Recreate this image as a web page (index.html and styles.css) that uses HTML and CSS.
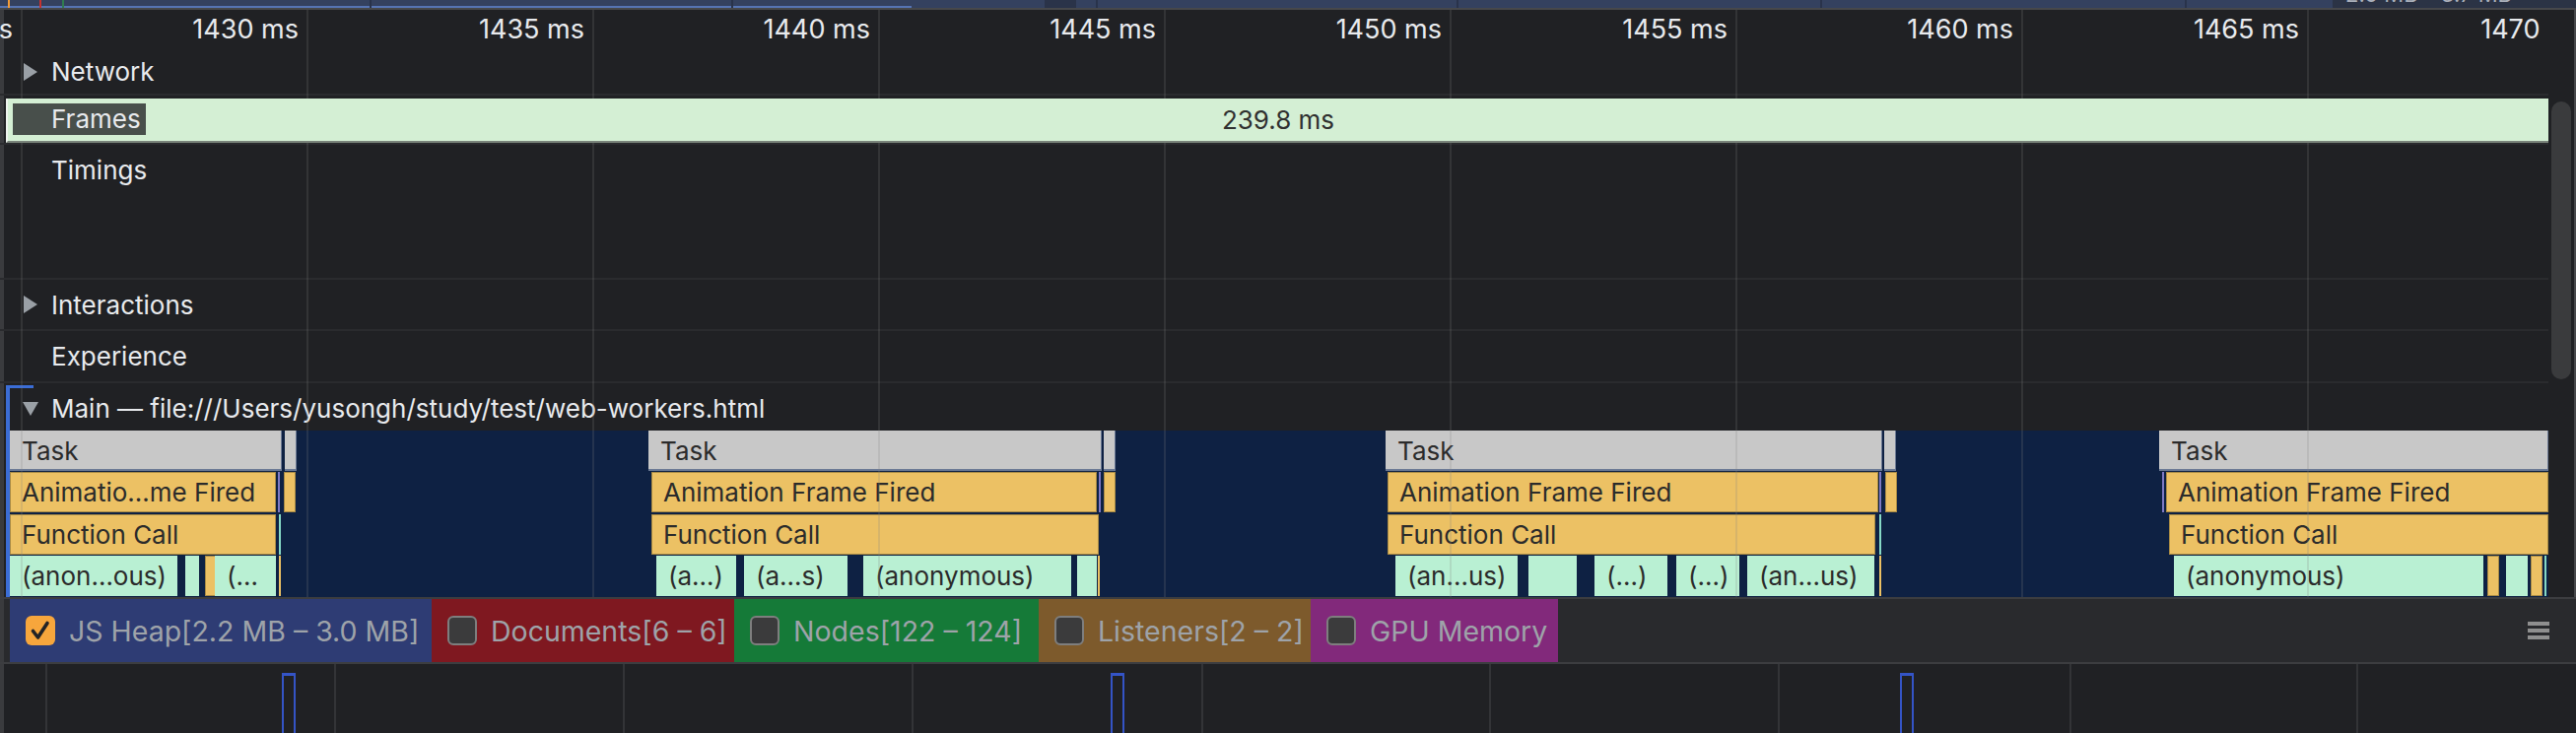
FILE: index.html
```html
<!DOCTYPE html>
<html>
<head>
<meta charset="utf-8">
<title>Performance</title>
<link rel="stylesheet" href="styles.css">
</head>
<body>
<div class="panel">
  <div class="overview">
    <span class="ov-sel"></span>
    <span class="ov-line" style="left:375px"></span>
    <span class="ov-line" style="left:742px"></span>
    <span class="ov-block" style="left:1060px;width:32px"></span>
    <span class="ov-line" style="left:1112px"></span>
    <span class="ov-line" style="left:1478px"></span>
    <span class="ov-line" style="left:1847px"></span>
    <span class="ov-line" style="left:2217px"></span>
    <span class="ov-right"></span>
    <span class="ov-text">2.0 MB – 3.7 MB</span>
    <span class="ov-mark ov-orange" style="left:8px"></span>
    <span class="ov-mark ov-red" style="left:40px"></span>
    <span class="ov-mark ov-green" style="left:63px"></span>
  </div>
  <div class="divider"></div>

  <div class="workspace">
    <div class="timeline">
      <div class="ruler">
        <span class="tick-label" style="left:13px">1425 ms</span>
        <span class="tick-label" style="left:303px">1430 ms</span>
        <span class="tick-label" style="left:593px">1435 ms</span>
        <span class="tick-label" style="left:883px">1440 ms</span>
        <span class="tick-label" style="left:1173px">1445 ms</span>
        <span class="tick-label" style="left:1463px">1450 ms</span>
        <span class="tick-label" style="left:1753px">1455 ms</span>
        <span class="tick-label" style="left:2043px">1460 ms</span>
        <span class="tick-label" style="left:2333px">1465 ms</span>
        <span class="tick-label" style="left:2623px">1470 ms</span>
      </div>

      <div class="track track-network">
        <span class="caret caret-right"></span><span class="track-title">Network</span>
      </div>

      <div class="track track-frames">
        <div class="frames-bar">
          <span class="frames-label">Frames</span>
          <span class="frames-dur">239.8 ms</span>
        </div>
      </div>

      <div class="track track-timings">
        <div class="track-head">
          <span class="caret caret-none"></span><span class="track-title">Timings</span>
        </div>
      </div>

      <div class="track track-interactions">
        <span class="caret caret-right"></span><span class="track-title">Interactions</span>
      </div>

      <div class="track track-experience">
        <span class="caret caret-none"></span><span class="track-title">Experience</span>
      </div>

      <div class="main-group">
        <div class="track track-main">
          <span class="caret caret-down"></span><span class="track-title">Main — file:///Users/yusongh/study/test/web-workers.html</span>
        </div>
        <div class="flame">
          <div class="frow">
            <div class="bar task" style="left:0;width:276px">Task</div>
            <div class="bar task" style="left:279px;width:5px"></div>
            <div class="bar task" style="left:648px;width:460px">Task</div>
            <div class="bar task" style="left:1110px;width:5px"></div>
            <div class="bar task" style="left:1396px;width:504px">Task</div>
            <div class="bar task" style="left:1902px;width:8px"></div>
            <div class="bar task" style="left:2181px;width:395px">Task</div>
          </div>
          <div class="frow">
            <div class="bar aff" style="left:0;width:270px">Animatio…me Fired</div>
            <div class="bar thin purple" style="left:272px;width:2px"></div>
            <div class="bar aff" style="left:278px;width:4px"></div>
            <div class="bar aff" style="left:651px;width:452px">Animation Frame Fired</div>
            <div class="bar thin purple" style="left:1105px;width:2px"></div>
            <div class="bar aff" style="left:1110px;width:5px"></div>
            <div class="bar aff" style="left:1398px;width:498px">Animation Frame Fired</div>
            <div class="bar thin purple" style="left:1897px;width:2px"></div>
            <div class="bar aff" style="left:1903px;width:7px"></div>
            <div class="bar thin purple" style="left:2184px;width:2px"></div>
            <div class="bar aff" style="left:2188px;width:388px">Animation Frame Fired</div>
          </div>
          <div class="frow">
            <div class="bar aff" style="left:0;width:270px">Function Call</div>
            <div class="bar thin teal" style="left:273px;width:2px"></div>
            <div class="bar aff" style="left:651px;width:454px">Function Call</div>
            <div class="bar aff" style="left:1398px;width:495px">Function Call</div>
            <div class="bar thin teal" style="left:1897px;width:2px"></div>
            <div class="bar aff" style="left:2191px;width:385px">Function Call</div>
          </div>
          <div class="frow">
            <div class="bar anon" style="left:0;width:170px">(anon…ous)</div>
            <div class="bar anon" style="left:178px;width:14px"></div>
            <div class="bar aff" style="left:198px;width:7px"></div>
            <div class="bar anon" style="left:208px;width:62px">(…</div>
            <div class="bar thin orange" style="left:273px;width:2px"></div>
            <div class="bar anon" style="left:656px;width:81px">(a…)</div>
            <div class="bar anon" style="left:745px;width:105px">(a…s)</div>
            <div class="bar anon" style="left:866px;width:211px">(anonymous)</div>
            <div class="bar anon" style="left:1083px;width:20px"></div>
            <div class="bar thin orange" style="left:1104px;width:2px"></div>
            <div class="bar anon" style="left:1406px;width:124px">(an…us)</div>
            <div class="bar anon" style="left:1541px;width:49px"></div>
            <div class="bar anon" style="left:1608px;width:74px">(…)</div>
            <div class="bar anon" style="left:1691px;width:64px">(…)</div>
            <div class="bar anon" style="left:1763px;width:129px">(an…us)</div>
            <div class="bar thin orange" style="left:1897px;width:2px"></div>
            <div class="bar anon" style="left:2196px;width:314px">(anonymous)</div>
            <div class="bar aff" style="left:2514px;width:8px"></div>
            <div class="bar anon" style="left:2533px;width:22px"></div>
            <div class="bar aff" style="left:2558px;width:7px"></div>
            <div class="bar thin teal" style="left:2572px;width:2px"></div>
          </div>
        </div>
      </div>

      <div class="grid">
        <i class="gl" style="left:21px"></i>
        <i class="gl" style="left:311px"></i>
        <i class="gl" style="left:601px"></i>
        <i class="gl" style="left:891px"></i>
        <i class="gl" style="left:1181px"></i>
        <i class="gl" style="left:1471px"></i>
        <i class="gl" style="left:1761px"></i>
        <i class="gl" style="left:2051px"></i>
        <i class="gl" style="left:2341px"></i>
      </div>
    </div>
    <div class="scrollcol"><div class="thumb"></div></div>
  </div>

  <div class="counters">
    <label class="counter c-heap">
      <span class="checkbox on"><svg viewBox="0 0 30 30" width="30" height="30"><path d="M7.5 15.5 L12.5 22 L22 7.5" fill="none" stroke="#222326" stroke-width="3.6" stroke-linecap="round" stroke-linejoin="round"/></svg></span>
      <span class="counter-text">JS Heap[2.2 MB – 3.0 MB]</span>
    </label>
    <label class="counter c-docs">
      <span class="checkbox off"></span>
      <span class="counter-text">Documents[6 – 6]</span>
    </label>
    <label class="counter c-nodes">
      <span class="checkbox off"></span>
      <span class="counter-text">Nodes[122 – 124]</span>
    </label>
    <label class="counter c-listen">
      <span class="checkbox off"></span>
      <span class="counter-text">Listeners[2 – 2]</span>
    </label>
    <label class="counter c-gpu">
      <span class="checkbox off"></span>
      <span class="counter-text">GPU Memory</span>
    </label>
    <div class="menu"><i></i><i></i><i></i></div>
  </div>

  <div class="memchart">
    <i class="mgl" style="left:46px"></i>
    <i class="mgl" style="left:339px"></i>
    <i class="mgl" style="left:632px"></i>
    <i class="mgl" style="left:925px"></i>
    <i class="mgl" style="left:1219px"></i>
    <i class="mgl" style="left:1511px"></i>
    <i class="mgl" style="left:1804px"></i>
    <i class="mgl" style="left:2100px"></i>
    <i class="mgl" style="left:2391px"></i>
    <span class="spike" style="left:286px"></span>
    <span class="spike" style="left:1127px"></span>
    <span class="spike" style="left:1928px"></span>
  </div>
</div>
</body>
</html>
```

FILE: styles.css
```css
* { box-sizing: border-box; margin: 0; padding: 0; }
html, body {
  width: 2614px;
  height: 744px;
  overflow: hidden;
  background: #202124;
}
body {
  font-family: Inter, "Liberation Sans", Arial, sans-serif;
  color: #e8eaed;
}
.panel {
  display: flex;
  flex-direction: column;
  width: 2614px;
  height: 744px;
}

/* overview strip */
.overview {
  position: relative;
  flex: none;
  height: 8px;
  background: #34415f;
  overflow: hidden;
}
.ov-sel { position: absolute; left: 0; width: 925px; bottom: 0; height: 2px; background: #5674b3; }
.ov-line { position: absolute; top: 0; bottom: 0; width: 2px; background: #29334b; }
.ov-block { position: absolute; top: 0; bottom: 0; background: #2a3349; }
.ov-right { position: absolute; left: 2367px; right: 0; top: 0; bottom: 0; background: #2b3345; }
.ov-text { position: absolute; left: 2380px; top: -18px; font-size: 22px; line-height: 24px; color: #aab0bb; white-space: nowrap; }
.ov-mark { position: absolute; top: 0; bottom: 0; width: 2px; }
.ov-orange { background: #f29b38; }
.ov-red { background: #c8322f; }
.ov-green { background: #2f7d4f; }
.divider { flex: none; height: 2px; background: #47484b; }

/* main workspace */
.workspace {
  flex: none;
  display: flex;
  height: 596px;
}
.timeline {
  position: relative;
  width: 2586px;
  overflow: hidden;
  display: flex;
  flex-direction: column;
  box-shadow: inset 4px 0 #3a3b3e;
}
.scrollcol {
  width: 28px;
  padding: 93px 3px 0 3px;
  border-right: 2px solid #47484b;
}
.thumb {
  width: 20px;
  height: 282px;
  border-radius: 10px;
  background: #3a3b3d;
}

/* ruler */
.ruler {
  position: relative;
  flex: none;
  height: 40px;
}
.tick-label {
  position: absolute;
  top: 0;
  line-height: 40px;
  font-size: 27px;
  color: #e8eaed;
  white-space: nowrap;
  transform: translateX(-100%);
}

/* tracks */
.track {
  flex: none;
  display: flex;
  align-items: center;
  gap: 13px;
  padding-left: 23px;
  border-bottom: 2px solid #2a2b2e;
  font-size: 26px;
  white-space: nowrap;
}
.track-network { height: 47px; }
.track-frames { height: 50px; padding: 3px 0 0 0; align-items: flex-start; }
.track-timings { height: 137px; padding-left: 0; align-items: flex-start; }
.track-head { display: flex; align-items: center; gap: 13px; height: 50px; padding-left: 23px; }
.track-interactions { height: 52px; }
.track-experience { height: 53px; }
.track-main { height: 48px; border-bottom: 0; padding-top: 3px; }

.track-title { color: #e8eaed; }
.caret {
  flex: none;
  width: 16px;
  height: 18px;
  display: flex;
  align-items: center;
  justify-content: center;
}
.caret-right::before {
  content: "";
  border-left: 14px solid #9aa0a6;
  border-top: 9px solid transparent;
  border-bottom: 9px solid transparent;
}
.caret-down::before {
  content: "";
  border-top: 14px solid #9aa0a6;
  border-left: 8px solid transparent;
  border-right: 8px solid transparent;
}

/* frames */
.frames-bar {
  position: relative;
  z-index: 6;
  width: 2580px;
  margin-left: 6px;
  height: 45px;
  background: #d4efd4;
  border-left: 2px solid #eef3ee;
  border-bottom: 2px solid #79837a;
  display: flex;
  align-items: center;
  justify-content: center;
}
.frames-label {
  position: absolute;
  left: 5px;
  top: 5px;
  height: 32px;
  line-height: 32px;
  padding: 0 5px 0 39px;
  background: rgba(32, 33, 36, 0.78);
  color: #e8eaed;
  font-size: 26px;
}
.frames-dur {
  color: #303030;
  font-size: 26px;
}

/* main thread */
.main-group {
  position: relative;
  flex: none;
}
.main-group::before {
  content: "";
  position: absolute;
  left: 6px;
  top: 2px;
  bottom: 0;
  width: 24px;
  border-left: 4px solid #3b6dd6;
  border-top: 3px solid #3b6dd6;
}
.flame {
  margin-left: 10px;
  height: 169px;
  background: #0e2143;
  display: grid;
  grid-template-rows: 42px 43px 42px 42px;
}
.frow { position: relative; }
.bar {
  position: absolute;
  top: 0;
  height: 41px;
  line-height: 41px;
  padding-left: 12px;
  font-size: 26px;
  color: #2b2b2b;
  white-space: nowrap;
  overflow: hidden;
}
.bar.thin { padding: 0; }
.task { background: #c8c8c8; box-shadow: inset -1px -2px 0 #6c7a95; }
.aff { background: #ecc164; box-shadow: inset 0 0 0 1px #a98b45; }
.anon { background: #b9f0d3; }
.purple { background: #7d79c4; }
.teal { background: #86d9c6; }
.orange { background: #ecc164; }

/* grid overlay */
.grid {
  position: absolute;
  inset: 0;
  pointer-events: none;
  z-index: 5;
}
.gl {
  position: absolute;
  top: 0;
  bottom: 0;
  width: 2px;
  background: rgba(128, 128, 128, 0.2);
}

/* counters */
.counters {
  flex: none;
  height: 68px;
  display: flex;
  align-items: stretch;
  padding-left: 10px;
  background: #292a2d;
  border-top: 2px solid #3c3d40;
  border-bottom: 2px solid #3c3d40;
  box-shadow: inset 4px 0 #3a3b3e;
}
.counter {
  display: flex;
  align-items: center;
  gap: 14px;
  padding-left: 16px;
  font-size: 28.5px;
  color: #9ea3a9;
  white-space: nowrap;
  overflow: hidden;
}
.c-heap { width: 428px; background: #2e3c74; }
.c-docs { width: 307px; background: #7f1820; }
.c-nodes { width: 309px; background: #157a38; }
.c-listen { width: 276px; background: #7d5a2c; }
.c-gpu { width: 251px; background: #82297b; }
.checkbox {
  flex: none;
  width: 30px;
  height: 30px;
  border-radius: 6px;
  display: flex;
}
.checkbox.on { background: #f7a63c; }
.checkbox.off { background: #3b3b3c; border: 2px solid #7e7e7e; }
.menu {
  align-self: center;
  margin-left: auto;
  margin-right: 27px;
  width: 22px;
  display: flex;
  flex-direction: column;
  gap: 3px;
}
.menu i {
  display: block;
  height: 4px;
  background: #8f8f8f;
}

/* memory chart */
.memchart {
  position: relative;
  flex: none;
  height: 70px;
  overflow: hidden;
  box-shadow: inset 4px 0 #3a3b3e;
}
.mgl {
  position: absolute;
  top: 0;
  bottom: 0;
  width: 2px;
  background: #333437;
}
.spike {
  position: absolute;
  top: 9px;
  bottom: -4px;
  width: 14px;
  border: 2px solid #3454c6;
  border-top-width: 3px;
}
```
